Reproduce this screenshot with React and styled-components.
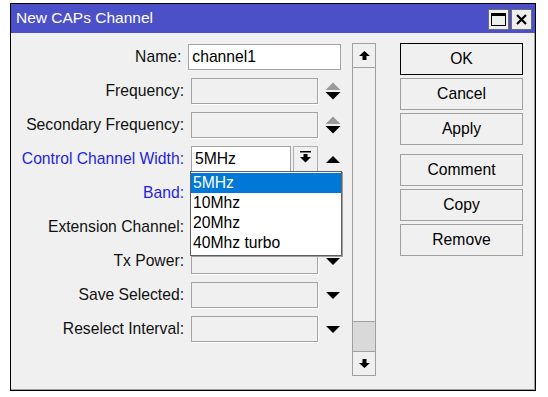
import React from "react";
import styled, { createGlobalStyle } from "styled-components";

const GlobalStyle = createGlobalStyle`
  body {
    margin: 0;
    padding: 3px 0 0 10px;
    background: #ffffff;
    font-family: "Liberation Sans", Arial, sans-serif;
  }
`;

const Window = styled.div`
  width: 526px;
  height: 388px;
  box-sizing: border-box;
  border: 1px solid #000;
  display: flex;
  flex-direction: column;
  background: #f0f0f0;
`;

const TitleBar = styled.div`
  height: 29px;
  background: #4c50c8;
  display: flex;
  align-items: center;
  padding: 0 3px 0 5px;
`;

const Title = styled.div`
  flex: 1;
  color: #fff;
  font-size: 15.5px;
  padding-bottom: 1px;
`;

const TitleButton = styled.div`
  width: 21px;
  height: 21px;
  box-sizing: border-box;
  margin-left: 2px;
  margin-top: 1px;
  border: 1px solid #6d6d6d;
  background: #eeeeee;
  display: flex;
  align-items: center;
  justify-content: center;
`;

const Body = styled.div`
  flex: 1;
  display: flex;
  padding-top: 10px;
  box-shadow: inset -1px -1px 0 #a0a0a0;
`;

const Form = styled.div`
  width: 330px;
  display: flex;
  flex-direction: column;
  gap: 8px;
  padding-top: 1px;
`;

const Row = styled.div`
  display: flex;
  align-items: center;
  height: 26px;
`;

const Label = styled.div`
  width: 173px;
  text-align: right;
  font-size: 15.7px;
  color: ${p => (p.$blue ? "#1f1fe0" : "#111")};
  margin-right: 7px;
  white-space: nowrap;
`;

const FieldWrap = styled.div`
  position: relative;
  display: flex;
`;

const Field = styled.div`
  width: ${p => p.$w}px;
  height: 26px;
  box-sizing: border-box;
  border: 1px solid #a3a3a3;
  background: ${p => (p.$disabled ? "#f0f0f0" : "#fff")};
  box-shadow: ${p => (p.$disabled ? "1px 1px 0 #fff" : "none")};
  font-size: 15.7px;
  color: #000;
  padding: 3px 0 0 3px;
`;

const DropButton = styled.div`
  width: 25px;
  height: 26px;
  box-sizing: border-box;
  margin-left: 2px;
  border: 1px solid #b0b0b0;
  border-bottom-color: #f0f0f0;
  background: #f0f0f0;
  display: flex;
  justify-content: center;
  padding-top: 4px;
`;

const ArrowSlot = styled.div`
  width: 16px;
  margin-left: 7px;
  display: flex;
  align-items: center;
  justify-content: center;
`;

const DropList = styled.div`
  position: absolute;
  left: -1px;
  top: 25px;
  width: 152px;
  box-sizing: border-box;
  border: 1px solid #5f5f5f;
  background: #fff;
  box-shadow: 1px 1px 0 #a0a0a0;
  padding: 1px 0 2px;
  z-index: 2;
`;

const DropItem = styled.div`
  height: 20px;
  line-height: 20px;
  font-size: 15.7px;
  padding-left: 2px;
  background: ${p => (p.$selected ? "#0078d7" : "transparent")};
  color: ${p => (p.$selected ? "#fff" : "#000")};
`;

const Scrollbar = styled.div`
  width: 24px;
  height: 333px;
  margin-left: 11px;
  box-sizing: border-box;
  border: 1px solid #a0a0a0;
  display: flex;
  flex-direction: column;
  background: #f0f0f0;
`;

const ScrollButton = styled.div`
  height: 23px;
  display: flex;
  align-items: center;
  justify-content: center;
  border-${p => (p.$down ? "top" : "bottom")}: 1px solid #a0a0a0;
  background: #f0f0f0;
`;

const Track = styled.div`
  flex: 1;
  display: flex;
  flex-direction: column;
  justify-content: flex-end;
`;

const Thumb = styled.div`
  height: 29px;
  background: #d9d9d9;
  border-top: 1px solid #a0a0a0;
`;

const Buttons = styled.div`
  margin-left: 24px;
  width: 123px;
  display: flex;
  flex-direction: column;
  gap: 3px;
`;

const Button = styled.div`
  height: 32px;
  box-sizing: border-box;
  border: 1px solid ${p => (p.$primary ? "#000" : "#a0a0a0")};
  background: #f0f0f0;
  display: flex;
  align-items: center;
  justify-content: center;
  font-size: 15.7px;
  color: #000;
  margin-top: ${p => (p.$group ? "6px" : "0")};
`;

const Down = ({ w = 14, color = "#000" }) => (
  <svg width={w} height="7" viewBox="0 0 14 7">
    <path d="M0 0 H14 L7 7 Z" fill={color} />
  </svg>
);

const Up = ({ w = 14, color = "#000" }) => (
  <svg width={w} height="7" viewBox="0 0 14 7">
    <path d="M0 7 H14 L7 0 Z" fill={color} />
  </svg>
);

const Spinner = () => (
  <svg width="16" height="18" viewBox="0 0 16 18">
    <path d="M0.5 8 H15.5 L8 0.5 Z" fill="#9a9a9a" />
    <path d="M0.5 10 H15.5 L8 17.5 Z" fill="#000" />
  </svg>
);

const rows = [
  { label: "Frequency:", arrow: "spin" },
  { label: "Secondary Frequency:", arrow: "spin" }
];

const lowerRows = [
  { label: "Band:", blue: true },
  { label: "Extension Channel:" },
  { label: "Tx Power:" },
  { label: "Save Selected:" },
  { label: "Reselect Interval:" }
];

const options = ["5MHz", "10Mhz", "20Mhz", "40Mhz turbo"];

export default function App() {
  return (
    <>
      <GlobalStyle />
      <Window>
        <TitleBar>
          <Title>New CAPs Channel</Title>
          <TitleButton>
            <svg width="15" height="13" viewBox="0 0 15 13">
              <rect x="0.5" y="0.5" width="14" height="12" fill="none" stroke="#000" />
              <rect x="0" y="0" width="15" height="3" fill="#000" />
            </svg>
          </TitleButton>
          <TitleButton>
            <svg width="11" height="11" viewBox="0 0 11 11">
              <path d="M1 1 L10 10 M10 1 L1 10" stroke="#000" strokeWidth="2.2" />
            </svg>
          </TitleButton>
        </TitleBar>
        <Body>
          <Form>
            <Row>
              <Label>Name:</Label>
              <Field $w={155}>channel1</Field>
            </Row>
            {rows.map(r => (
              <Row key={r.label}>
                <Label>{r.label}</Label>
                <Field $w={127} $disabled />
                <ArrowSlot>
                  <Spinner />
                </ArrowSlot>
              </Row>
            ))}
            <Row>
              <Label $blue>Control Channel Width:</Label>
              <FieldWrap>
                <Field $w={100}>5MHz</Field>
                <DropButton>
                  <svg width="11" height="12" viewBox="0 0 11 12">
                    <rect x="0" y="0" width="11" height="1.5" fill="#000" />
                    <path d="M3.5 3 H7.5 V6 H11 L5.5 11.5 L0 6 H3.5 Z" fill="#000" />
                  </svg>
                </DropButton>
                <DropList>
                  {options.map((o, i) => (
                    <DropItem key={o} $selected={i === 0}>
                      {o}
                    </DropItem>
                  ))}
                </DropList>
              </FieldWrap>
              <ArrowSlot>
                <Up />
              </ArrowSlot>
            </Row>
            {lowerRows.map(r => (
              <Row key={r.label}>
                <Label $blue={r.blue}>{r.label}</Label>
                <Field $w={127} $disabled />
                <ArrowSlot>
                  <Down />
                </ArrowSlot>
              </Row>
            ))}
          </Form>
          <Scrollbar>
            <ScrollButton>
              <svg width="11" height="9" viewBox="0 0 11 9">
                <path d="M5.5 0 L11 5 H7.5 V9 H3.5 V5 H0 Z" fill="#000" />
              </svg>
            </ScrollButton>
            <Track>
              <Thumb />
            </Track>
            <ScrollButton $down>
              <svg width="11" height="9" viewBox="0 0 11 9">
                <path d="M5.5 9 L11 4 H7.5 V0 H3.5 V4 H0 Z" fill="#000" />
              </svg>
            </ScrollButton>
          </Scrollbar>
          <Buttons>
            <Button $primary>OK</Button>
            <Button>Cancel</Button>
            <Button>Apply</Button>
            <Button $group>Comment</Button>
            <Button>Copy</Button>
            <Button>Remove</Button>
          </Buttons>
        </Body>
      </Window>
    </>
  );
}
